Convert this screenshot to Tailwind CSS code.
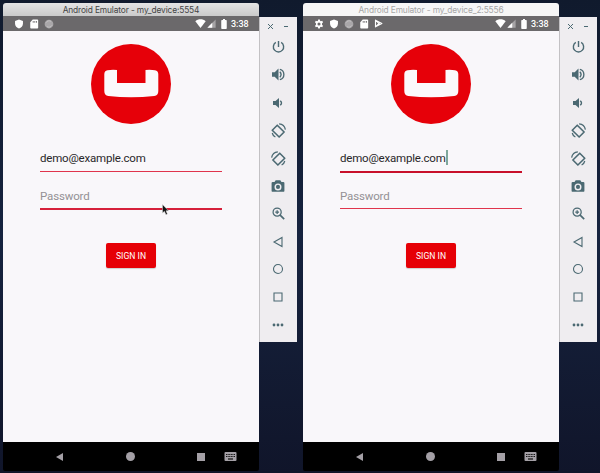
<!DOCTYPE html>
<html lang="en">
<head>
<meta charset="utf-8">
<title>Android Emulators</title>
<script src="https://cdn.jsdelivr.net/npm/@tailwindcss/browser@4"></script>
</head>
<body class="w-[600px] h-[473px] overflow-hidden font-[Roboto,sans-serif] bg-linear-to-b from-[#101a2d] via-[#16233f] to-[#10152a]">
<svg class="hidden">
  <symbol id="shield" viewBox="0 0 24 24"><path fill="currentColor" d="M12 1 2.500 4.500V11c0 5.500 4 10.700 9.500 12 5.500-1.300 9.500-6.500 9.500-12V4.500z"/></symbol>
  <symbol id="sd" viewBox="0 0 24 24"><path fill="currentColor" fill-rule="evenodd" d="M20 1H9L3 8v13q0 2 2 2h15q2 0 2-2V3q0-2-2-2zM9 5h2v4H9zm4 0h2v4h-2zm4 0h2v4h-2z"/></symbol>
  <symbol id="sync" viewBox="0 0 24 24"><circle cx="12" cy="12" r="10.500" fill="#a9a7a9"/><path d="M5 9a8 8 0 0 1 12-3M19 15a8 8 0 0 1-12 3" fill="none" stroke="#c4c2c4" stroke-width="2"/></symbol>
  <symbol id="gear" viewBox="0 0 24 24"><path fill="currentColor" fill-rule="evenodd" d="M10 1h4l.6 3.200 2 1.100 3-1.200 2.200 3.700-2.500 2.100v4.200l2.500 2.100-2.200 3.700-3-1.200-2 1.100L14 23h-4l-.6-3.200-2-1.100-3 1.200-2.200-3.700 2.500-2.100V9.900L2.200 7.800l2.200-3.700 3 1.200 2-1.100zM12 8.300a3.700 3.700 0 1 0 0 7.400 3.700 3.700 0 0 0 0-7.400z"/></symbol>
  <symbol id="play" viewBox="0 0 24 24"><path fill="none" stroke="currentColor" stroke-width="3" stroke-linejoin="round" d="M4 3v18l17-9zM4 3l12 12M4 21 16 9"/></symbol>
  <symbol id="wifi" viewBox="0 0 24 20"><path fill="currentColor" d="M12 20 .5 5C7-.8 17-.8 23.500 5z"/></symbol>
  <symbol id="signal" viewBox="0 0 24 24"><path fill="#a5a3a5" d="M23 1v22H1z"/><path fill="currentColor" d="M14 10v13H1z"/></symbol>
  <symbol id="battery" viewBox="0 0 12 20"><path fill="currentColor" d="M4 0h4v2h2q1.500 0 1.500 1.500v15Q11.500 20 10 20H2Q.5 20 .5 18.500v-15Q.5 2 2 2h2z"/></symbol>
  <symbol id="logo" viewBox="0 0 80 80"><circle cx="40" cy="40" r="40" fill="#e60009"/><path fill="#fbf8fb" d="M16.500 26.300Q21 25.400 26 26V39H54.500V26q5-.6 9.500.3 3.300.7 3.300 4V47q0 4.300-4 5Q40 54.500 17.300 52q-4-.6-4-5V30.300q0-3.300 3.200-4z"/></symbol>
  <symbol id="power" viewBox="0 0 24 24"><path fill="none" stroke="currentColor" stroke-width="2.600" d="M12 2v11M7 4.500a9.500 9.500 0 1 0 10 0"/></symbol>
  <symbol id="volup" viewBox="0 0 24 24"><path fill="currentColor" d="M0 8v8h5l7 7V1L5 8z"/><path fill="none" stroke="currentColor" stroke-width="2.500" d="M14.500 7q4.500 5 0 10M14.500 2.500a9.800 9.800 0 0 1 0 19"/></symbol>
  <symbol id="voldown" viewBox="0 0 24 24"><path fill="currentColor" d="M2 8v8h5l7 6V2L7 8z"/><path fill="none" stroke="currentColor" stroke-width="2.800" d="M16.500 7.500q5 4.500 0 9"/></symbol>
  <symbol id="rotate" viewBox="0 0 24 24"><path fill="none" stroke="currentColor" stroke-width="2.500" stroke-linejoin="round" d="M10 3.500 21 14.500 13 22.500 2 11.500z"/><path fill="none" stroke="currentColor" stroke-width="2" d="M13 1.300Q21.500 2 23 10.500M2 16q1 4.500 5 6.500"/></symbol>
  <symbol id="camera" viewBox="0 0 24 24"><path fill="currentColor" fill-rule="evenodd" d="m8 2-2 3H3Q1 5 1 7v13q0 2 2 2h18q2 0 2-2V7q0-2-2-2h-3l-2-3zm4 5.500a6 6 0 1 0 0 12 6 6 0 0 0 0-12zm0 2.500a3.500 3.500 0 1 1 0 7 3.500 3.500 0 0 1 0-7z"/></symbol>
  <symbol id="zoomin" viewBox="0 0 24 24"><path fill="none" stroke="currentColor" stroke-width="2.300" d="M9.500 2a7.500 7.500 0 1 0 0 15 7.500 7.500 0 0 0 0-15zM9.500 6v7M6 9.500h7"/><path stroke="currentColor" stroke-width="3" d="m15 15 7.500 7.500"/></symbol>
  <symbol id="back" viewBox="0 0 24 24"><path fill="none" stroke="currentColor" stroke-width="2.200" d="M20 3v18L4 12z"/></symbol>
  <symbol id="home" viewBox="0 0 24 24"><circle cx="12" cy="12" r="9" fill="none" stroke="currentColor" stroke-width="2.200"/></symbol>
  <symbol id="square" viewBox="0 0 24 24"><path fill="none" stroke="currentColor" stroke-width="2.200" d="M4 4h16v16H4z"/></symbol>
  <symbol id="more" viewBox="0 0 24 24"><g fill="currentColor"><circle cx="4" cy="12" r="2.800"/><circle cx="12" cy="12" r="2.800"/><circle cx="20" cy="12" r="2.800"/></g></symbol>
  <symbol id="keyboard" viewBox="0 0 24 18"><rect width="24" height="18" rx="2" fill="#a4a0a6"/><path stroke="#161616" stroke-width="2" stroke-dasharray="2.200 1" d="M3 5h18M3 9h18"/><path stroke="#161616" stroke-width="2.500" d="M7 14h10"/></symbol>
</svg>

<main class="flex gap-[6px] pl-[3px] pt-[3px]">
  <!-- Device 1 -->
  <section class="flex w-[294px]">
    <div class="w-[256px]">
      <header class="h-[13px] rounded-t-[3px] bg-linear-to-b from-[#e4e4e4] to-[#cacaca] text-center text-[8.400px] leading-[14px] text-[#444] font-[Inter,sans-serif] whitespace-nowrap tracking-[-0.140px]">Android Emulator - my_device:5554</header>
      <div class="flex h-[15px] items-center bg-[#6b696b] pl-[11px] pr-[10px] text-white">
        <svg class="size-[10px]"><use href="#shield"/></svg>
        <svg class="ml-[5px] size-[10px]"><use href="#sd"/></svg>
        <svg class="ml-[5px] size-[10px]"><use href="#sync"/></svg>
        <svg class="ml-auto h-[9px] w-[11px]"><use href="#wifi"/></svg>
        <svg class="ml-[1px] size-[9px]"><use href="#signal"/></svg>
        <svg class="ml-[5px] h-[10px] w-[6px]"><use href="#battery"/></svg>
        <span class="ml-[4px] w-[18px] pt-[2px] text-[9px] font-medium leading-none whitespace-nowrap">3:38</span>
      </div>
      <div class="flex h-[411px] flex-col bg-[#f9f7fa] px-[37px] pt-[12.500px]">
        <svg class="ml-[50.500px] size-[80px] shrink-0"><use href="#logo"/></svg>
        <div class="mt-[22.500px] h-[26px] w-[182px] shrink-0 border-b border-[#e0344c] text-[11.500px] leading-[24px] tracking-[-0.200px] text-[#29272a]">demo@example.com</div>
        <div class="mt-[12px] h-[26px] w-[182px] shrink-0 border-b-2 border-[#d6203a] text-[11.500px] leading-[24px] tracking-[-0.150px] text-[#949195]">Password</div>
        <div class="ml-[66px] mt-[33px] flex h-[25px] w-[50px] shrink-0 items-center justify-center rounded-[2px] bg-[#e60006] pt-px text-[8.600px] text-white whitespace-nowrap shadow-[0_1px_1px_#ccc]">SIGN IN</div>
      </div>
      <nav class="flex h-[29px] items-center rounded-b-[2px] bg-black pl-[53px] text-[#a4a0a6]">
        <svg class="h-[8px] w-[7px]" viewBox="0 0 7 8"><path fill="currentColor" d="M7 0v8L0 4z"/></svg>
        <span class="ml-[63px] size-[9px] rounded-full bg-current"></span>
        <span class="ml-[62px] size-[8px] bg-current"></span>
        <svg class="ml-[19px] h-[9px] w-[13px]"><use href="#keyboard"/></svg>
      </nav>
    </div>
    <aside class="mt-[14px] flex h-[325px] w-[38px] flex-col items-center border-l border-[#c3c1c4] bg-[#efedf0] text-[#4b6972]">
      <div class="flex h-[16px] w-full shrink-0 items-center justify-between pl-[8px] pr-[9px] pt-[2px]">
        <svg class="size-[5px]" viewBox="0 0 4 4"><path stroke="currentColor" stroke-width=".8" d="m0 0 4 4M4 0 0 4"/></svg>
        <span class="h-[1px] w-[4px] bg-current"></span>
      </div>
      <div class="grid h-[306px] w-full grid-rows-11 place-items-center pr-[1px]">
        <svg class="size-[13px]"><use href="#power"/></svg>
        <svg class="size-[13px]"><use href="#volup"/></svg>
        <svg class="size-[12px]"><use href="#voldown"/></svg>
        <svg class="size-[15px]"><use href="#rotate"/></svg>
        <svg class="size-[15px] -scale-x-100"><use href="#rotate"/></svg>
        <svg class="size-[14px]"><use href="#camera"/></svg>
        <svg class="size-[13px]"><use href="#zoomin"/></svg>
        <svg class="size-[12px]"><use href="#back"/></svg>
        <svg class="size-[12px]"><use href="#home"/></svg>
        <svg class="size-[12px]"><use href="#square"/></svg>
        <svg class="size-[12px]"><use href="#more"/></svg>
      </div>
    </aside>
  </section>

  <!-- Device 2 -->
  <section class="flex w-[294px]">
    <div class="w-[256px]">
      <header class="h-[13px] rounded-t-[3px] bg-[#f6f6f6] text-center text-[8.400px] leading-[14px] text-[#a6a6a6] font-[Inter,sans-serif] whitespace-nowrap tracking-[-0.140px]">Android Emulator - my_device_2:5556</header>
      <div class="flex h-[15px] items-center bg-[#6b696b] pl-[11px] pr-[10px] text-white">
        <svg class="size-[10px]"><use href="#gear"/></svg>
        <svg class="ml-[5px] size-[10px]"><use href="#shield"/></svg>
        <svg class="ml-[5px] size-[10px]"><use href="#sync"/></svg>
        <svg class="ml-[5px] size-[10px]"><use href="#sd"/></svg>
        <svg class="ml-[5px] size-[9px]"><use href="#play"/></svg>
        <svg class="ml-auto h-[9px] w-[11px]"><use href="#wifi"/></svg>
        <svg class="ml-[1px] size-[9px]"><use href="#signal"/></svg>
        <svg class="ml-[5px] h-[10px] w-[6px]"><use href="#battery"/></svg>
        <span class="ml-[4px] w-[18px] pt-[2px] text-[9px] font-medium leading-none whitespace-nowrap">3:38</span>
      </div>
      <div class="flex h-[411px] flex-col bg-[#f9f7fa] px-[37px] pt-[12.500px]">
        <svg class="ml-[50.500px] size-[80px] shrink-0"><use href="#logo"/></svg>
        <div class="mt-[22.500px] flex h-[27px] w-[182px] shrink-0 border-b-2 border-[#c8102a] text-[11.500px] leading-[24px] tracking-[-0.200px] text-[#29272a]">demo@example.com<span class="mt-[4px] h-[15px] w-[2px] bg-[#7fa79b]"></span></div>
        <div class="mt-[11px] h-[25px] w-[182px] shrink-0 border-b border-[#e0344c] text-[11.500px] leading-[24px] tracking-[-0.150px] text-[#949195]">Password</div>
        <div class="ml-[66px] mt-[34px] flex h-[25px] w-[50px] shrink-0 items-center justify-center rounded-[2px] bg-[#e60006] pt-px text-[8.600px] text-white whitespace-nowrap shadow-[0_1px_1px_#ccc]">SIGN IN</div>
      </div>
      <nav class="flex h-[29px] items-center rounded-b-[2px] bg-black pl-[53px] text-[#a4a0a6]">
        <svg class="h-[8px] w-[7px]" viewBox="0 0 7 8"><path fill="currentColor" d="M7 0v8L0 4z"/></svg>
        <span class="ml-[63px] size-[9px] rounded-full bg-current"></span>
        <span class="ml-[62px] size-[8px] bg-current"></span>
        <svg class="ml-[19px] h-[9px] w-[13px]"><use href="#keyboard"/></svg>
      </nav>
    </div>
    <aside class="mt-[14px] flex h-[325px] w-[38px] flex-col items-center border-l border-[#c3c1c4] bg-[#efedf0] text-[#4b6972]">
      <div class="flex h-[16px] w-full shrink-0 items-center justify-between pl-[8px] pr-[9px] pt-[2px]">
        <svg class="size-[5px]" viewBox="0 0 4 4"><path stroke="currentColor" stroke-width=".8" d="m0 0 4 4M4 0 0 4"/></svg>
        <span class="h-[1px] w-[4px] bg-current"></span>
      </div>
      <div class="grid h-[306px] w-full grid-rows-11 place-items-center pr-[1px]">
        <svg class="size-[13px]"><use href="#power"/></svg>
        <svg class="size-[13px]"><use href="#volup"/></svg>
        <svg class="size-[12px]"><use href="#voldown"/></svg>
        <svg class="size-[15px]"><use href="#rotate"/></svg>
        <svg class="size-[15px] -scale-x-100"><use href="#rotate"/></svg>
        <svg class="size-[14px]"><use href="#camera"/></svg>
        <svg class="size-[13px]"><use href="#zoomin"/></svg>
        <svg class="size-[12px]"><use href="#back"/></svg>
        <svg class="size-[12px]"><use href="#home"/></svg>
        <svg class="size-[12px]"><use href="#square"/></svg>
        <svg class="size-[12px]"><use href="#more"/></svg>
      </div>
    </aside>
  </section>
</main>

<!-- Mouse pointer -->
<svg class="absolute left-[162px] top-[204px] h-[11px] w-[7px]" viewBox="0 0 7 11"><path fill="#111" stroke="#ddd" stroke-width=".5" d="M.5.5v8.500l1.900-1.700L4 10.700l1.400-.7L4 6.800h2.500z"/></svg>
</body>
</html>
